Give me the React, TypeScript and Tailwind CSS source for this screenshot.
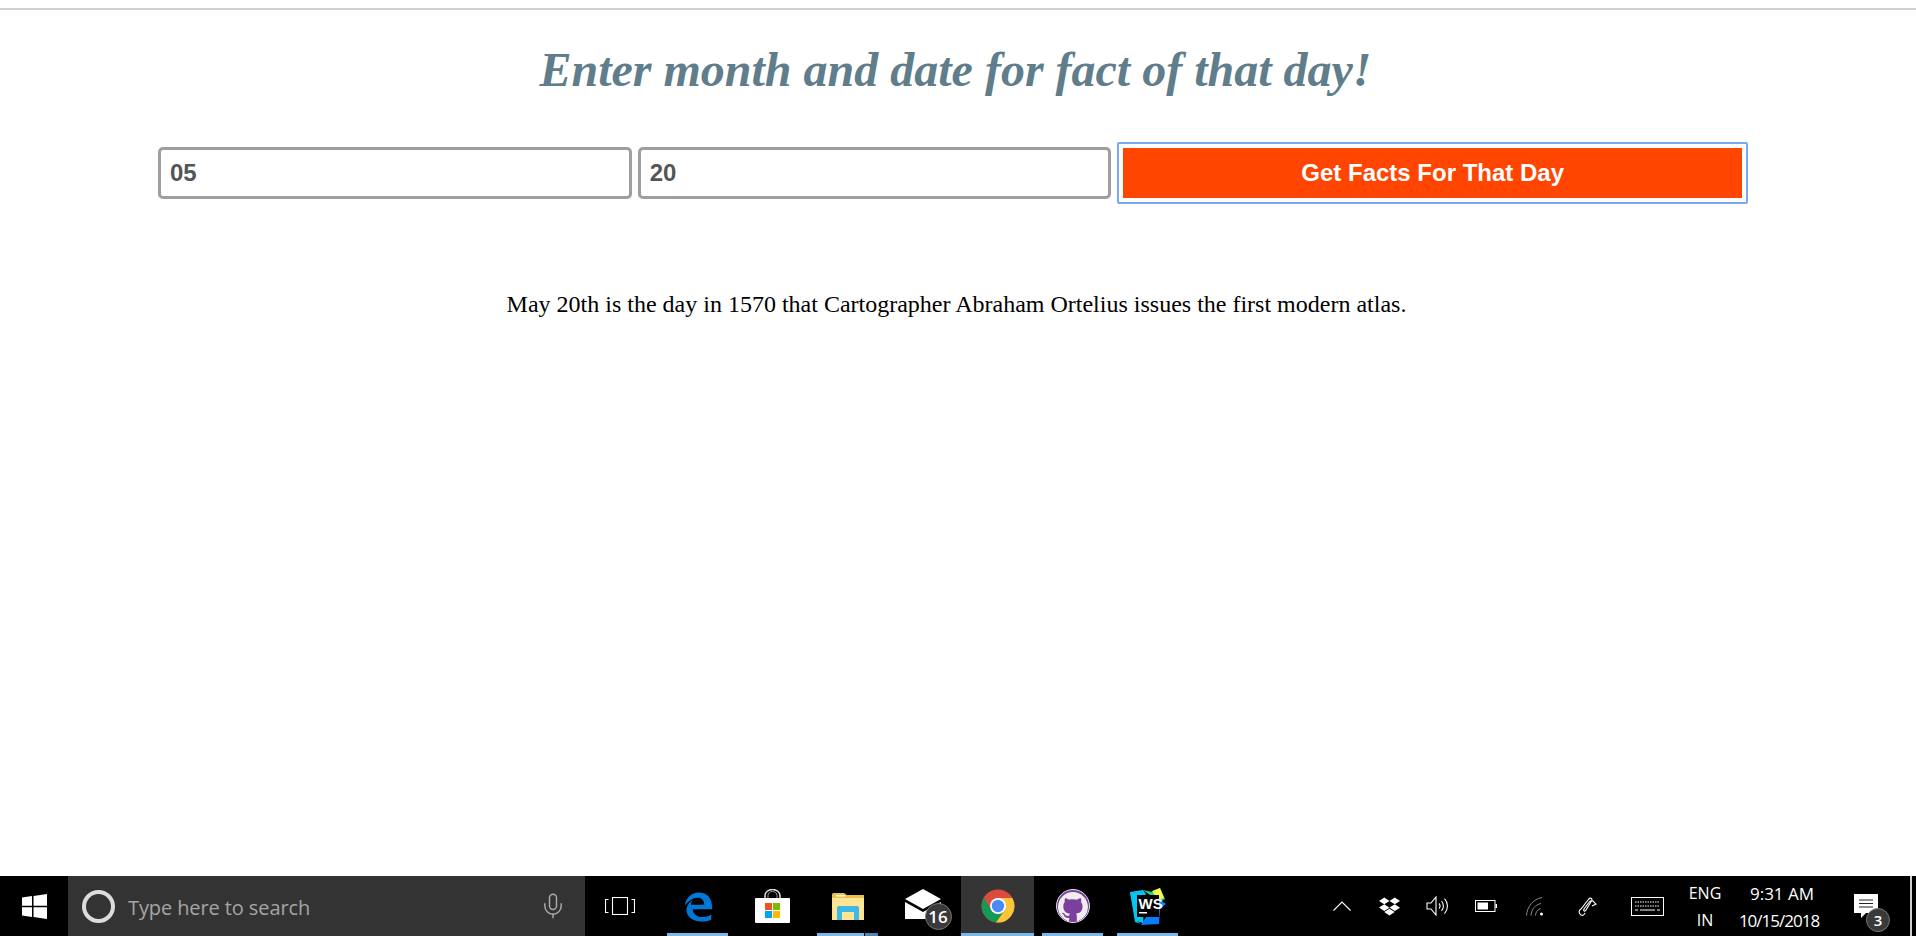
import type { ReactNode } from "react";
import { Mic } from "lucide-react";
import { FaDropbox } from "react-icons/fa";
import { VscGithubInverted } from "react-icons/vsc";

const sans = "font-['Liberation_Sans',Arial,sans-serif]";
const serif = "font-['Liberation_Serif','Times_New_Roman',serif]";
const ui = "font-['Open_Sans',sans-serif]";

function Pinned({ width, active, split, children }: { width: string; active?: boolean; split?: boolean; children: ReactNode }) {
  return (
    <div className={`relative flex h-full shrink-0 items-center justify-center ${width} ${active ? "bg-[#353535]" : ""}`}>
      {children}
      <span className="absolute bottom-0 left-0 right-0 h-[3px] bg-[#76b9ed]" />
      {split && <span className="absolute bottom-0 right-0 h-[3px] w-[14px] border-l border-black bg-[#4f87b8]" />}
    </div>
  );
}

function TrayCell({ width, children }: { width: string; children: ReactNode }) {
  return <div className={`flex h-full shrink-0 items-center justify-center ${width}`}>{children}</div>;
}

function EdgeIcon() {
  return (
    <svg width="30" height="31" viewBox="0 0 34 34">
      <path
        d="M2 16C3 7 10 1 18 1c9 0 15 6 15 17v2H11c.5 6 5 9 11 9 4 0 7-1 10-3v6c-3 1.500-7 2-11 2C10 34 4 28 4 21c0-5 3-9 8-12-2 2-3 4-3 6h15c0-5-3-8-7-8-6 0-11 4-15 9z"
        fill="#0078d7"
      />
    </svg>
  );
}

function StoreIcon() {
  return (
    <svg width="35" height="34" viewBox="0 0 35 34">
      <path d="M10 10V6.500a7.500 6 0 0 1 15 0V10" fill="none" stroke="#ddd" strokeWidth="1.500" />
      <path d="M13 10V6.500a4.500 4 0 0 1 9 0V10" fill="none" stroke="#999" strokeWidth="1" />
      <rect x="0" y="9" width="35" height="25" rx="1" fill="#fff" />
      <rect x="10" y="14" width="7" height="7" fill="#f25022" />
      <rect x="18" y="14" width="7" height="7" fill="#7fba00" />
      <rect x="10" y="22" width="7" height="7" fill="#00a4ef" />
      <rect x="18" y="22" width="7" height="7" fill="#ffb900" />
    </svg>
  );
}

function FolderIcon() {
  return (
    <svg width="32" height="27" viewBox="0 0 32 27">
      <path d="M0 1.500Q0 0 1.500 0H12l3 2h17v25H0z" fill="#e8c04f" />
      <rect x="0" y="5" width="32" height="22" fill="#fde594" />
      <rect x="4" y="2" width="9" height="1.500" fill="#fff8d8" />
      <path d="M5 27V15q0-2 2-2h18q2 0 2 2v12h-5v-8H10v8z" fill="#3fb7e9" />
    </svg>
  );
}

function MailIcon() {
  return (
    <svg width="36" height="30" viewBox="0 0 36 30">
      <path d="M0 10L18 0l18 10-18 10z" fill="#fff" />
      <path d="M0 13l18 10 18-10v17H0z" fill="#fff" />
    </svg>
  );
}

function ChromeIcon() {
  return (
    <svg width="34" height="34" viewBox="0 0 34 34">
      <circle cx="17" cy="17" r="16.500" fill="#db4c3f" />
      <path d="M10 21L3 8.500A16.500 16.500 0 0 0 15 33.400L24 21z" fill="#159a55" />
      <path d="M17 9H31.300A16.500 16.500 0 0 1 15 33.400L24 21z" fill="#fbc53a" />
      <circle cx="17" cy="17" r="8" fill="#fff" />
      <circle cx="17" cy="17" r="6.200" fill="#4a8af4" />
    </svg>
  );
}

function WebStormIcon() {
  return (
    <span className="relative flex h-[37px] w-[36px] items-center justify-center">
      <svg width="36" height="37" viewBox="0 0 36 37" className="absolute left-0 top-0">
        <path d="M0 4l13-2 3 4-9 27 4 3-6-2z" fill="#07c3f2" />
        <path d="M13 2l9 2 8-4 5 11-5 3z" fill="#21d789" />
        <path d="M22 3l8-3 4 10-6 2z" fill="#fcf84a" />
        <path d="M28 10l8 6-6 5-1 15-18 1z" fill="#087cfa" />
        <path d="M0 4l6 29 7 2 2-30z" fill="#07c3f2" />
        <rect x="7" y="7" width="22" height="22" fill="#000" />
        <rect x="9" y="24" width="8" height="1.500" fill="#fff" />
      </svg>
      <span className={`absolute left-[9px] top-[7px] text-[15px] font-bold leading-[18px] text-white ${sans}`}>WS</span>
    </span>
  );
}

export default function App() {
  return (
    <div className="flex h-[936px] w-full flex-col overflow-hidden bg-white">
      <div className="mt-2 h-0.5 shrink-0 bg-[#d0d0d0]" />
      <main className="flex min-h-0 flex-1 flex-col">
        <h1 className={`mt-[26px] pr-[5px] text-center text-[48px] font-bold italic leading-[68px] text-[#607d8b] ${serif}`}>
          Enter month and date for fact of that day!
        </h1>
        <form className={`mt-[38px] flex items-center gap-[6px] pl-[158px] pr-[168px] ${sans}`}>
          <input
            readOnly
            value="05"
            className="h-[52px] w-[474px] rounded-[5px] border-[3px] border-[#9e9e9e] px-[9px] text-[24px] font-bold text-[#555]"
          />
          <input
            readOnly
            value="20"
            className="h-[52px] w-[474px] rounded-[5px] border-[3px] border-[#9e9e9e] px-[9px] text-[24px] font-bold text-[#555]"
          />
          <button
            type="button"
            className="h-[62px] w-[631px] rounded-[2px] border-2 border-[#7aa9f2] bg-white p-1 text-[24px] font-bold text-white"
          >
            <span className="flex h-full w-full items-center justify-center bg-[#ff4500]">Get Facts For That Day</span>
          </button>
        </form>
        <p className={`mt-[85px] pr-[3px] text-center text-[24px] leading-[30px] text-black ${serif}`}>
          May 20th is the day in 1570 that Cartographer Abraham Ortelius issues the first modern atlas.
        </p>
      </main>

      <footer className={`flex h-[60px] shrink-0 items-center bg-black text-white ${sans}`}>
        <div className="flex h-full w-[68px] shrink-0 items-center justify-center">
          <svg width="25" height="25" viewBox="0 0 25 25" fill="#fff">
            <path d="M0 3.500l10-1.400v9.600H0zM11.500 1.900L25 0v11.700H11.500zM0 13.300h10v9.600L0 21.500zM11.500 13.300H25V25l-13.500-1.900z" />
          </svg>
        </div>
        <div className="flex h-full w-[517px] shrink-0 items-center bg-[#333] pl-[14px] pr-[18px]">
          <span className="h-[33px] w-[33px] shrink-0 rounded-full border-[4px] border-[#dcdcdc]" />
          <span className={`ml-[13px] flex-1 pt-[3px] text-[20px] tracking-[-0.1px] text-[#a5a5a5] ${ui}`}>Type here to search</span>
          <Mic size={28} strokeWidth={1.25} className="text-[#aaa]" />
        </div>
        <div className="flex h-full w-[70px] shrink-0 items-center justify-center">
          <svg width="30" height="18" viewBox="0 0 30 18" fill="none" stroke="#fff" strokeWidth="1.100">
            <rect x="7.500" y=".5" width="15" height="17" />
            <path d="M3.500 2.500H.5v13h3M26.500 2.500h3v13h-3" />
          </svg>
        </div>
        <div className="ml-[12px] flex h-full items-center">
          <Pinned width="w-[61px]"><EdgeIcon /></Pinned>
          <div className="flex h-full w-[89px] shrink-0 items-center justify-center"><StoreIcon /></div>
          <Pinned width="w-[61px]" split><FolderIcon /></Pinned>
          <div className="flex h-full w-[83px] shrink-0 items-center justify-center pl-[6px] pb-[4px]">
            <span className="relative flex">
              <MailIcon />
              <span className={`absolute left-[20px] top-[14px] flex h-[27px] w-[27px] items-center justify-center rounded-full border border-[#777] bg-[#3a3a3a] text-[17px] font-semibold text-white ${ui}`}>
                16
              </span>
            </span>
          </div>
          <Pinned width="w-[73px]" active><ChromeIcon /></Pinned>
          <div className="ml-[8px] flex h-full">
            <Pinned width="w-[61px]">
              <span className="flex h-[34px] w-[34px] items-end justify-center overflow-hidden rounded-full border border-[#ddd] bg-[#7b3f9e]">
                <VscGithubInverted size={30} className="text-[#eee]" />
              </span>
            </Pinned>
          </div>
          <div className="ml-[14px] flex h-full">
            <Pinned width="w-[61px]"><WebStormIcon /></Pinned>
          </div>
        </div>
        <div className="ml-auto flex h-full items-center">
          <TrayCell width="w-[48px]">
            <svg width="18" height="10" viewBox="0 0 18 10" fill="none" stroke="#fff" strokeWidth="1.100">
              <path d="M.5 9.500L9 1l8.500 8.500" />
            </svg>
          </TrayCell>
          <TrayCell width="w-[47px]"><FaDropbox size={21} /></TrayCell>
          <TrayCell width="w-[48px]">
            <svg width="23" height="20" viewBox="0 0 23 20" fill="none" stroke="#fff" strokeWidth="1.100">
              <path d="M1 7h4l5-6v18l-5-6H1zM13 7.500a3.500 3.500 0 0 1 0 5M15.500 5a7.500 7.500 0 0 1 0 10M18.500 2.500a11 11 0 0 1 0 15" />
            </svg>
          </TrayCell>
          <TrayCell width="w-[49px]">
            <svg width="22" height="12" viewBox="0 0 22 12">
              <rect x=".5" y=".5" width="19.500" height="11" fill="none" stroke="#fff" />
              <rect x="2.500" y="2.500" width="10.500" height="7" fill="#fff" />
              <rect x="20.500" y="4" width="1.500" height="4" fill="#fff" />
            </svg>
          </TrayCell>
          <TrayCell width="w-[50px]">
            <svg width="19" height="19" viewBox="0 0 19 19" fill="none" stroke="#888" strokeWidth="1">
              <path d="M.5 18.500C1 10 7 2 16 .5M5 18.500C5.500 12 9 8 15 6.500M9.500 18.500c0-3 2-6 5-7" />
              <circle cx="15.500" cy="17" r="1.500" fill="#fff" stroke="none" />
            </svg>
          </TrayCell>
          <TrayCell width="w-[54px]">
            <svg width="19" height="20" viewBox="0 0 19 20" fill="none" stroke="#fff" strokeWidth="1.100">
              <path d="M3 19c-3-2-2-5 0-6l7-9c2-3 4-2 4 0l-6 10c-1 2-3 1-2-1l6-8M12 5h3l3 3-4 2M3 19c2 1 3 0 4-2" />
            </svg>
          </TrayCell>
          <TrayCell width="w-[66px]">
            <svg width="33" height="19" viewBox="0 0 33 19" fill="none" stroke="#fff">
              <rect x=".5" y=".5" width="32" height="18" />
              <path d="M4 5h25M4 9h25" strokeDasharray="1.500 1" />
              <path d="M4 13h3M9 13h15M26 13h3" />
            </svg>
          </TrayCell>
          <div className={`flex h-full w-[50px] shrink-0 flex-col items-center justify-center pt-[2px] text-[16px] leading-[27px] ${ui}`}>
            <span>ENG</span>
            <span>IN</span>
          </div>
          <div className={`flex h-full w-[104px] shrink-0 flex-col items-center justify-center pt-[2px] leading-[27px] ${ui}`}>
            <span className="text-[17px]">9:31 AM</span>
            <span className="pr-[6px] text-[17px] tracking-[-1px]">10/15/2018</span>
          </div>
          <div className="relative ml-[20px] h-full w-[36px] shrink-0">
            <svg width="24" height="24" viewBox="0 0 24 24" className="absolute left-0 top-[18px]">
              <path d="M0 0h24v19H12l-5 5v-5H0z" fill="#fff" />
              <path d="M5 6h14M5 9.500h14M5 13h14" stroke="#222" strokeWidth="1.200" />
            </svg>
            <span className={`absolute left-[12px] top-[32px] flex h-[24px] w-[24px] items-center justify-center rounded-full border border-[#777] bg-[#3a3a3a] text-[15px] font-semibold ${ui}`}>
              3
            </span>
          </div>
          <div className="ml-[20px] h-full w-[2px] bg-[#cfcfcf]" />
          <div className="h-full w-[4px]" />
        </div>
      </footer>
    </div>
  );
}
